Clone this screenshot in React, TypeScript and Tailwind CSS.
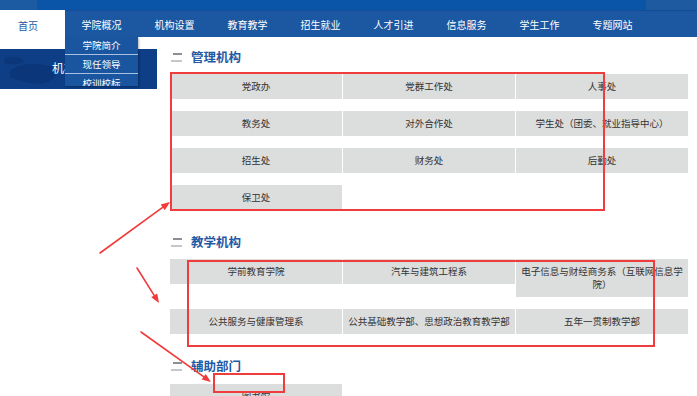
import React from "react";

const navItems = ["学院概况", "机构设置", "教育教学", "招生就业", "人才引进", "信息服务", "学生工作", "专题网站"];

function Heading({ title }: { title: string }) {
  return (
    <div className="flex items-center h-[18px]">
      <div className="flex flex-col gap-[5px] w-[12px] mr-[8px] ml-[1px]">
        <div className="h-[2px] w-[9px] ml-[2px] bg-[#8a8f96]" />
        <div className="h-[2px] w-[11px] bg-[#c4c7cc]" />
      </div>
      <span className="text-[12.5px] font-bold text-[#1f5aa5] leading-[18px]">{title}</span>
    </div>
  );
}

function Cell({ children }: { children: React.ReactNode }) {
  return (
    <div className="w-[172px] bg-[#dcdddd] text-[#333] text-[9.5px] leading-[13px] py-[6px] px-[4px] text-center">
      {children}
    </div>
  );
}

function Grid({ children }: { children: React.ReactNode }) {
  return <div className="flex flex-wrap items-start w-[519px] gap-x-[1px] gap-y-[12px]">{children}</div>;
}

function Arrow({ x1, y1, x2, y2 }: { x1: number; y1: number; x2: number; y2: number }) {
  const dx = x2 - x1;
  const dy = y2 - y1;
  const len = Math.sqrt(dx * dx + dy * dy);
  const ux = dx / len;
  const uy = dy / len;
  const hl = 9;
  const hw = 3.5;
  const bx = x2 - ux * hl;
  const by = y2 - uy * hl;
  const p1 = `${x2},${y2}`;
  const p2 = `${bx - uy * hw},${by + ux * hw}`;
  const p3 = `${bx + uy * hw},${by - ux * hw}`;
  return (
    <g>
      <line x1={x1} y1={y1} x2={bx + ux * 2} y2={by + uy * 2} stroke="#f23a3a" strokeWidth={1.6} strokeLinecap="round" />
      <polygon points={`${p1} ${p2} ${p3}`} fill="#f23a3a" />
    </g>
  );
}

export default function App() {
  return (
    <div
      className="relative w-[697px] h-[396px] overflow-hidden bg-white"
      style={{ fontFamily: '"Noto Sans CJK SC", "Noto Sans", sans-serif' }}
    >
      {/* top banner strip */}
      <div className="flex h-[10px] bg-[#0b55a8]">
        <div className="w-[37px] bg-[#1c5aa2]" />
        <div className="flex-1" />
        <div className="w-[51px] bg-[#1e5aa0]" />
      </div>

      {/* nav bar */}
      <div className="flex h-[27px] bg-[#1b58a1] border-t border-[#134d95]">
        <div className="w-[65px] h-[38px] -mt-[1px] bg-white text-[#1b58a1] text-[10px] pr-[9px] flex items-start justify-center pt-[8px]">
          首页
        </div>
        {navItems.map((n) => (
          <div key={n} className="w-[73px] text-white text-[10px] flex items-center justify-center">
            {n}
          </div>
        ))}
      </div>

      <div className="flex">
        {/* left sidebar */}
        <div className="w-[170px] pt-[12px]">
          <div className="relative w-[157px] h-[40px] bg-[#0d3e86] overflow-hidden">
            <svg className="absolute left-0 top-0" width="157" height="40">
              <path d="M10 22 C22 12 40 14 52 18 C60 24 54 32 44 34 C32 36 20 32 10 28 Z" fill="#0b3679" />
              <path d="M4 10 C12 6 20 8 24 12 C20 16 10 16 4 14 Z" fill="#0b3679" />
            </svg>
            <span className="absolute left-[52px] top-[11px] text-white text-[12px] leading-[16px]">机构设置</span>
          </div>
        </div>

        {/* main content */}
        <div className="pt-[11px]">
          <Heading title="管理机构" />
          <div className="mt-[8px]">
            <Grid>
              <Cell>党政办</Cell>
              <Cell>党群工作处</Cell>
              <Cell>人事处</Cell>
              <Cell>教务处</Cell>
              <Cell>对外合作处</Cell>
              <Cell>学生处（团委、就业指导中心）</Cell>
              <Cell>招生处</Cell>
              <Cell>财务处</Cell>
              <Cell>后勤处</Cell>
              <Cell>保卫处</Cell>
            </Grid>
          </div>

          <div className="mt-[23px]">
            <Heading title="教学机构" />
          </div>
          <div className="mt-[8px]">
            <Grid>
              <Cell>学前教育学院</Cell>
              <Cell>汽车与建筑工程系</Cell>
              <Cell>
                <span className="whitespace-nowrap">电子信息与财经商务系（互联网信息学</span>
                <br />
                院）
              </Cell>
              <Cell>公共服务与健康管理系</Cell>
              <Cell>公共基础教学部、思想政治教育教学部</Cell>
              <Cell>五年一贯制教学部</Cell>
            </Grid>
          </div>

          <div className="mt-[23px]">
            <Heading title="辅助部门" />
          </div>
          <div className="mt-[9px]">
            <Grid>
              <Cell>图书馆</Cell>
            </Grid>
          </div>
        </div>
      </div>

      {/* dropdown menu */}
      <div className="absolute left-[65px] top-[37px] w-[73px] h-[49px] bg-[#1a56a0] shadow-[1px_1px_2px_rgba(0,0,0,0.3)] overflow-hidden text-white text-[9.5px]">
        <div className="h-[18px] flex items-center justify-center border-b border-[#a9c0e0]">学院简介</div>
        <div className="h-[19px] flex items-center justify-center border-b border-[#a9c0e0]">现任领导</div>
        <div className="h-[18px] flex items-center justify-center">校训校标</div>
      </div>

      {/* annotation boxes */}
      <div className="absolute left-[170px] top-[72px] w-[435px] h-[139px] border-2 border-[#f03c3c]" />
      <div className="absolute left-[187px] top-[260px] w-[468px] h-[87px] border-2 border-[#f03c3c]" />
      <div className="absolute left-[213px] top-[373px] w-[72px] h-[20px] border-2 border-[#f03c3c]" />

      {/* arrows */}
      <svg className="absolute left-0 top-0 pointer-events-none" width="697" height="396">
        <Arrow x1={100} y1={253} x2={170} y2={202} />
        <Arrow x1={137} y1={268} x2={159} y2={303} />
        <Arrow x1={141} y1={332} x2={211} y2={382} />
      </svg>
    </div>
  );
}
